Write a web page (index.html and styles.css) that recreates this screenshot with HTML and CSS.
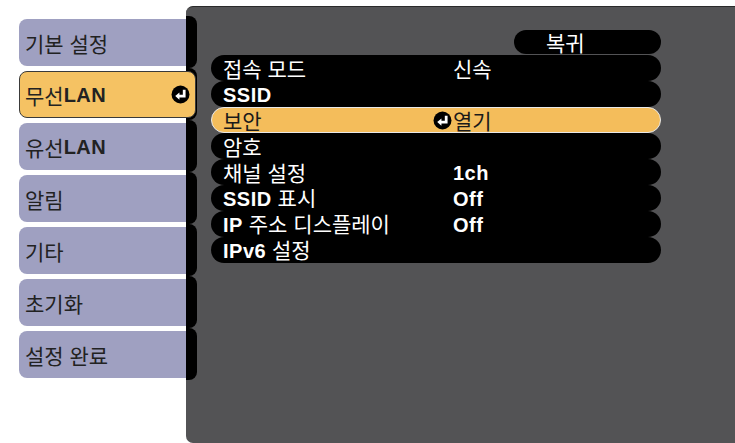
FILE: index.html
```html
<!DOCTYPE html>
<html lang="ko">
<head>
  <meta charset="UTF-8" />
  <meta name="viewport" content="width=device-width, initial-scale=1" />
  <title>무선LAN 설정</title>
  <link rel="stylesheet" href="styles.css">
</head>
<body>

  <div class="screen">
    <ul class="tabs">
      <li class="tab">기본 설정</li>
      <li class="tab active">무선<b>LAN</b>
        <svg class="enter" viewBox="0 0 18 18"><circle cx="9" cy="9" r="8.5"/><path d="M12.5 4.5 V10.5 H7"/><polygon points="4,10.5 8,7 8,14"/></svg>
      </li>
      <li class="tab">유선<b>LAN</b></li>
      <li class="tab">알림</li>
      <li class="tab">기타</li>
      <li class="tab">초기화</li>
      <li class="tab">설정 완료</li>
    </ul>

    <section class="panel">
      <div class="rail">
        <span></span><span></span><span></span><span></span><span></span><span></span><span></span>
      </div>

      <div class="menu">
        <div class="back"><span>복귀</span></div>
        <div class="row"><span class="label">접속 모드</span><span class="mark"></span><span class="value">신속</span></div>
        <div class="row"><span class="label"><b>SSID</b></span><span class="mark"></span><span class="value"></span></div>
        <div class="row selected"><span class="label">보안</span>
          <span class="mark"><svg class="enter" viewBox="0 0 18 18"><circle cx="9" cy="9" r="8.5"/><path d="M12.5 4.5 V10.5 H7"/><polygon points="4,10.5 8,7 8,14"/></svg></span>
          <span class="value">열기</span></div>
        <div class="row"><span class="label">암호</span><span class="mark"></span><span class="value"></span></div>
        <div class="row"><span class="label">채널 설정</span><span class="mark"></span><span class="value"><b>1ch</b></span></div>
        <div class="row"><span class="label"><b>SSID</b> 표시</span><span class="mark"></span><span class="value"><b>Off</b></span></div>
        <div class="row"><span class="label"><b>IP</b> 주소 디스플레이</span><span class="mark"></span><span class="value"><b>Off</b></span></div>
        <div class="row"><span class="label"><b>IPv6</b> 설정</span><span class="mark"></span><span class="value"></span></div>
      </div>
    </section>
  </div>

</body>
</html>
```

FILE: styles.css
```css
body {
  margin: 0;
  background: #fff;
  font-family: "Noto Sans CJK KR", "Noto Sans", sans-serif;
  font-size: 21px;
  color: #222;
}
b {
  font-family: "Liberation Sans", Arial, sans-serif;
  font-size: 20px;
  font-weight: bold;
  letter-spacing: 0.5px;
}
.screen {
  display: flex;
  height: 443px;
  overflow: hidden;
}

/* left tabs */
.tabs {
  list-style: none;
  margin: 19px 0 0 19px;
  padding: 0;
  width: 167px;
  display: flex;
  flex-direction: column;
  gap: 5px;
}
.tab {
  height: 47px;
  box-sizing: border-box;
  padding-left: 6px;
  display: flex;
  align-items: center;
  background: #9fa0c1;
  border-radius: 8px 0 0 8px;
  line-height: 22px;
}
.tab.active {
  position: relative;
  z-index: 1;
  margin-right: -10px;
  padding-left: 5px;
  background: #f5c263;
  border: 1px solid #3a3a3a;
  border-radius: 8px;
}
.tab.active .enter {
  margin-left: auto;
  margin-right: 5px;
}
.enter {
  width: 19px;
  height: 19px;
  display: block;
}
.enter circle {
  fill: #000;
}
.enter path {
  fill: none;
  stroke: #fff;
  stroke-width: 2.6;
}
.enter polygon {
  fill: #fff;
}

/* dark panel */
.panel {
  flex: 1;
  margin-top: 6px;
  display: flex;
  background: #535355;
  border-top: 1px solid #2a2a2a;
  border-radius: 7px 0 0 7px;
}
.rail {
  width: 11px;
  padding-top: 9px;
  display: flex;
  flex-direction: column;
}
.rail span {
  height: 52px;
  background: #000;
  border-radius: 0 8px 8px 0;
}
.menu {
  width: 450px;
  padding: 23px 0 0 14px;
}
.back {
  display: flex;
  justify-content: flex-end;
  height: 24px;
  margin-bottom: 1px;
}
.back span {
  width: 147px;
  box-sizing: border-box;
  padding-left: 32px;
  background: #000;
  color: #fff;
  border-radius: 12px;
  line-height: 24px;
}
.row {
  height: 26px;
  display: flex;
  align-items: center;
  padding-left: 12px;
  background: #000;
  color: #fff;
  border-radius: 13px;
  box-sizing: border-box;
  white-space: nowrap;
  line-height: 22px;
}
.row.selected {
  background: #f4bd5b;
  color: #1a1a1a;
  border: 1px solid #e8e8e8;
  padding-left: 11px;
}
.label {
  width: 210px;
}
.mark {
  width: 19px;
  margin-right: 1px;
}
.value {
  flex: 1;
}
```
